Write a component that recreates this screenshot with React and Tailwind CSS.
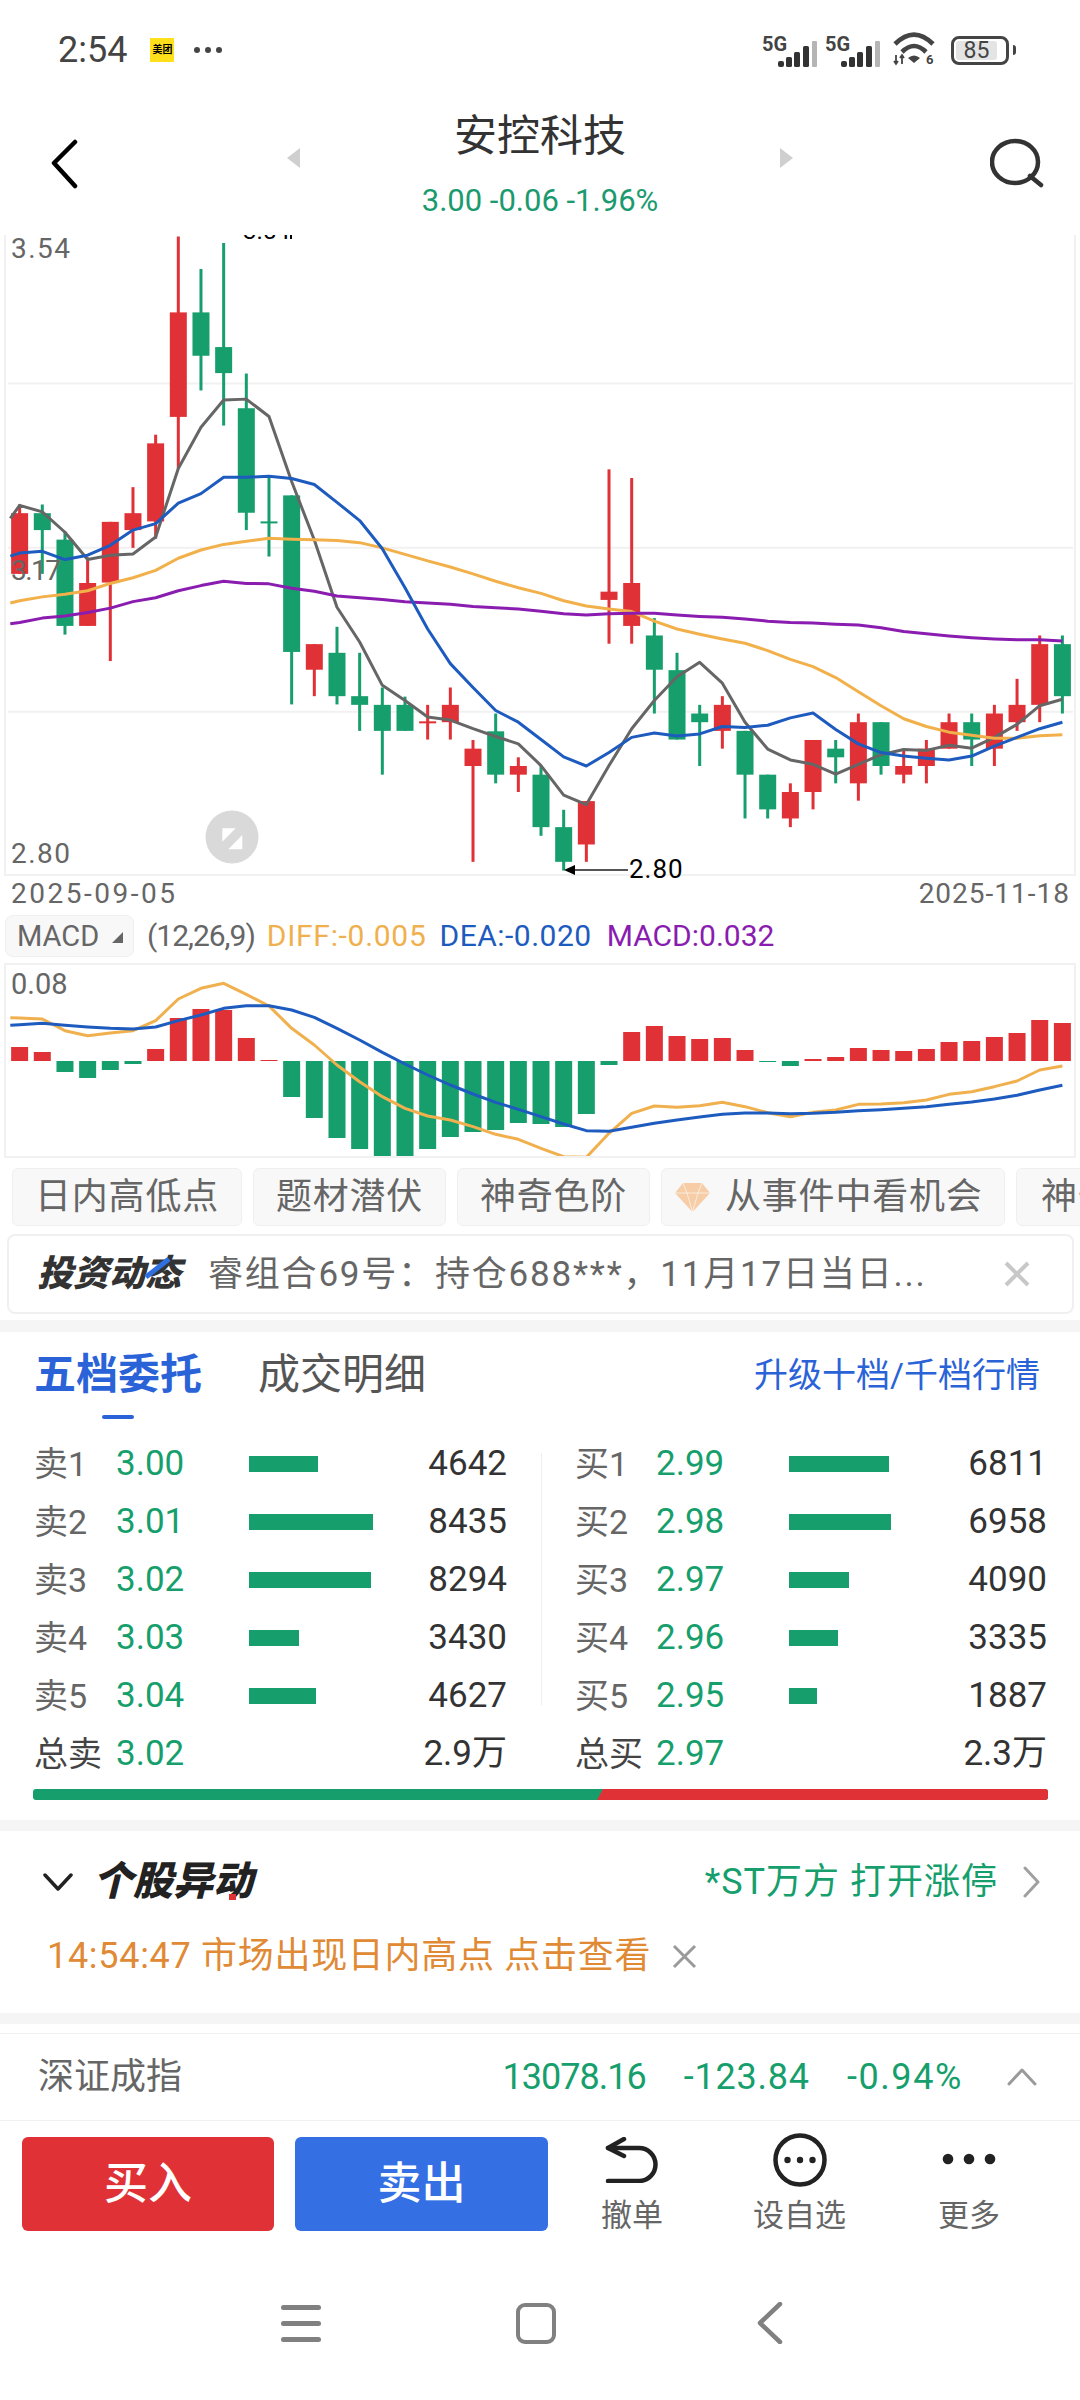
import React from "react";

const GREEN = "#169f6c";
const RED = "#e03136";

// [high, top, bottom, low, isRed] read off the chart
const candles = [
  [633, 653, 793, 793, 1], [633, 653, 692, 793, 0], [695, 714, 913, 933, 0], [755, 814, 913, 913, 1],
  [673, 673, 813, 994, 1], [593, 653, 692, 733, 1], [472, 492, 672, 712, 1], [15, 190, 431, 551, 1],
  [90, 190, 290, 370, 0], [30, 270, 330, 451, 0], [331, 411, 652, 692, 0], [570, 672, 676, 753, 0],
  [612, 612, 973, 1094, 0], [955, 955, 1014, 1075, 1], [915, 975, 1075, 1094, 0], [975, 1075, 1095, 1155, 0],
  [1055, 1095, 1155, 1256, 0], [1076, 1095, 1155, 1155, 0], [1095, 1133, 1137, 1175, 1], [1055, 1095, 1135, 1175, 1],
  [1176, 1196, 1236, 1457, 1], [1115, 1156, 1256, 1276, 0], [1216, 1236, 1256, 1296, 1], [1236, 1256, 1377, 1397, 0],
  [1337, 1377, 1457, 1477, 0], [1317, 1317, 1417, 1457, 1], [552, 834, 853, 954, 1], [572, 814, 913, 954, 1],
  [895, 935, 1014, 1115, 0], [975, 1015, 1175, 1175, 0], [1095, 1115, 1135, 1236, 0], [1075, 1095, 1155, 1196, 1],
  [1155, 1155, 1256, 1357, 0], [1256, 1256, 1336, 1357, 0], [1276, 1296, 1357, 1377, 1], [1176, 1176, 1296, 1336, 1],
  [1176, 1196, 1216, 1276, 0], [1115, 1135, 1276, 1316, 1], [1135, 1135, 1236, 1256, 0], [1196, 1236, 1256, 1276, 1],
  [1176, 1196, 1236, 1276, 1], [1115, 1135, 1196, 1196, 1], [1115, 1135, 1175, 1236, 0], [1095, 1115, 1196, 1236, 1],
  [1035, 1095, 1135, 1155, 1], [935, 955, 1095, 1135, 1], [935, 955, 1075, 1115, 0],
];

const ma5 = [665, 635, 650, 697, 760, 750, 747, 708, 550, 455, 392, 390, 430, 580, 715, 870, 950, 1050, 1085, 1123, 1130, 1150, 1168, 1185, 1235, 1303, 1325, 1235, 1150, 1085, 1030, 997, 1045, 1135, 1197, 1222, 1232, 1255, 1232, 1210, 1198, 1200, 1188, 1195, 1170, 1140, 1097, 1082];
const ma10 = [752, 745, 741, 760, 750, 727, 692, 677, 630, 608, 570, 570, 568, 573, 587, 628, 670, 735, 825, 920, 1000, 1055, 1108, 1135, 1175, 1215, 1236, 1205, 1170, 1160, 1167, 1162, 1145, 1147, 1142, 1125, 1114, 1152, 1185, 1205, 1213, 1218, 1222, 1213, 1190, 1170, 1150, 1135];
const ma20 = [860, 855, 846, 840, 832, 815, 802, 785, 757, 738, 725, 718, 711, 713, 714, 716, 721, 733, 748, 763, 777, 793, 810, 825, 838, 855, 867, 874, 880, 902, 920, 932, 943, 953, 970, 990, 1007, 1032, 1065, 1097, 1127, 1145, 1158, 1165, 1172, 1172, 1166, 1164];
const ma60 = [908, 905, 895, 890, 882, 872, 857, 848, 832, 820, 810, 815, 816, 826, 833, 844, 848, 852, 857, 860, 863, 868, 871, 874, 879, 885, 888, 885, 884, 884, 888, 891, 893, 897, 902, 905, 906, 909, 911, 917, 926, 931, 936, 940, 943, 945, 945, 948];

const macdBars = [441, 456, 516, 534, 510, 492, 447, 354, 327, 330, 414, 480, 591, 654, 714, 747, 768, 768, 747, 711, 696, 690, 669, 672, 681, 642, 495, 396, 378, 408, 417, 414, 450, 486, 498, 477, 471, 444, 450, 453, 447, 426, 423, 411, 399, 360, 369];
const diffLine = [353, 354, 357, 392, 407, 399, 392, 362, 297, 265, 250, 283, 318, 385, 435, 495, 545, 590, 625, 648, 660, 680, 703, 718, 745, 770, 772, 700, 640, 618, 622, 617, 607, 620, 638, 650, 637, 630, 613, 612, 608, 600, 583, 575, 560, 543, 510, 498];
const deaLine = [376, 374, 370, 376, 381, 385, 387, 381, 362, 345, 325, 317, 317, 330, 352, 385, 420, 457, 492, 525, 555, 582, 607, 628, 650, 672, 692, 694, 682, 670, 660, 651, 643, 639, 639, 641, 640, 637, 632, 629, 625, 620, 613, 606, 597, 586, 570, 556];

const cx = (i) => (57 + i * 65.83) / 2.904;
const priceY = (z) => z / 2.306 + 230;
const macdY = (z) => z / 3 + 900;

const toPoints = (list, mapY) =>
  list.map((v, i) => `${i === 0 ? 10.3 : cx(i - 1)},${mapY(v)}`).join(" ");

const sells = [
  ["卖1", "3.00", 69, "4642"],
  ["卖2", "3.01", 124, "8435"],
  ["卖3", "3.02", 122, "8294"],
  ["卖4", "3.03", 50, "3430"],
  ["卖5", "3.04", 67, "4627"],
];
const buys = [
  ["买1", "2.99", 100, "6811"],
  ["买2", "2.98", 102, "6958"],
  ["买3", "2.97", 60, "4090"],
  ["买4", "2.96", 49, "3335"],
  ["买5", "2.95", 28, "1887"],
];

const Signal = () => (
  <svg width="56" height="38" viewBox="0 -6 56 38" className="shrink-0">
    <text x="0" y="14" fontSize="20" fontWeight="700" fill="#444" fontFamily="Roboto, sans-serif">5G</text>
    <rect x="16" y="24" width="6" height="6" rx="2" fill="#333" />
    <rect x="24" y="20" width="6" height="10" rx="1.5" fill="#333" />
    <rect x="32" y="15" width="6" height="15" rx="1.5" fill="#333" />
    <rect x="41" y="9" width="6" height="21" rx="1.5" fill="#333" />
    <rect x="50" y="4" width="5" height="26" rx="1" fill="#b5b5b5" />
  </svg>
);

const StatusBar = () => (
  <div className="h-[100px] flex items-center pl-[58px] pr-[64px]">
    <span className="text-[36px] leading-none text-[#444]">2:54</span>
    <span className="ml-[23px] w-[24px] h-[24px] bg-[#ffe01b] flex items-center justify-center text-[10px] leading-none text-black font-bold">美团</span>
    <span className="ml-[20px] flex gap-[5px]">
      <i className="w-[6px] h-[6px] rounded-full bg-[#444]" />
      <i className="w-[6px] h-[6px] rounded-full bg-[#444]" />
      <i className="w-[6px] h-[6px] rounded-full bg-[#444]" />
    </span>
    <div className="ml-auto flex items-center">
      <Signal />
      <div className="ml-[7px]"><Signal /></div>
      <svg width="44" height="38" viewBox="0 0 44 38" className="ml-[12px]" fill="none" stroke="#444" strokeWidth="4.6">
        <path d="M2 13 Q21 -6 40 13" />
        <path d="M9 21 Q21 9 33 21" />
        <path d="M15 27 Q21 22 27 27 L21 32 Z" fill="#444" stroke="none" />
        <path d="M3 24 V33 M9 24 V33 M1 30 L3 33 L5 30 M7 27 L9 24 L11 27" strokeWidth="1.8" />
        <text x="33" y="33" fontSize="13" fontWeight="700" fill="#444" stroke="none" fontFamily="Roboto, sans-serif">6</text>
      </svg>
      <div className="ml-[14px] w-[58px] h-[29px] rounded-[8px] border-[3px] border-[#444] p-[2px]">
        <div className="w-[41px] h-full rounded-[3px] bg-[#e4e4e4] flex items-center justify-center text-[23px] leading-none text-[#444]">85</div>
      </div>
      <span className="ml-[4px] w-[3px] h-[10px] rounded-r bg-[#444]" />
    </div>
  </div>
);

const Header = () => (
  <div className="h-[135px] flex justify-between">
    <div className="w-[300px] pl-[50px] flex items-start justify-between">
      <svg width="28" height="50" viewBox="0 0 28 50" fill="none" stroke="#000" strokeWidth="4.5" strokeLinecap="round" strokeLinejoin="round" className="mt-[39px]">
        <path d="M25 3 L4 24 L25 47" />
      </svg>
      <svg width="13" height="20" viewBox="0 0 13 20" className="mt-[48px]"><path d="M13 0 V20 L0 10 Z" fill="#cfcfcf" /></svg>
    </div>
    <div className="flex flex-col items-center pt-[11px]">
      <span className="text-[43px] leading-[50px] text-[#333]">安控科技</span>
      <span className="mt-[22px] text-[31px] leading-[36px] text-[#1a9a6e] whitespace-nowrap">3.00 -0.06 -1.96%</span>
    </div>
    <div className="w-[300px] pr-[36px] flex items-start justify-between">
      <svg width="13" height="20" viewBox="0 0 13 20" className="mt-[48px]"><path d="M0 0 V20 L13 10 Z" fill="#cfcfcf" /></svg>
      <svg width="54" height="50" viewBox="0 0 54 50" fill="none" stroke="#333" strokeWidth="4.5" strokeLinecap="round" className="mt-[38px]">
        <ellipse cx="25" cy="24" rx="23" ry="21" />
        <path d="M40 38 L51 47" />
      </svg>
    </div>
  </div>
);

const PriceChart = () => (
  <div className="ml-[4px] w-[1072px] h-[641px] border-x-2 border-b-2 border-[#f1f1f1]">
    <svg width="1068" height="639" viewBox="6 235 1068 639" className="overflow-visible block" fontFamily="Roboto, sans-serif">
      <defs>
        <clipPath id="priceClip"><rect x="0" y="235" width="1080" height="660" /></clipPath>
      </defs>
      <g clipPath="url(#priceClip)">
        {[354, 733, 1111].map((z) => (
          <line key={z} x1="8" x2="1073" y1={priceY(z)} y2={priceY(z)} stroke="#f1f1f1" strokeWidth="2" />
        ))}
        {candles.map(([high, top, bottom, low, up], i) => (
          <g key={i} fill={up ? RED : GREEN}>
            <rect x={cx(i) - 1.5} y={priceY(high)} width="3" height={priceY(low) - priceY(high)} />
            <rect x={cx(i) - 8.5} y={priceY(top)} width="17" height={Math.max(priceY(bottom) - priceY(top), 2)} />
          </g>
        ))}
        <g fill="none" strokeWidth="3" strokeLinejoin="round">
          <polyline points={toPoints(ma5, priceY)} stroke="#666" />
          <polyline points={toPoints(ma20, priceY)} stroke="#f2b04a" />
          <polyline points={toPoints(ma60, priceY)} stroke="#8a1cb0" />
          <polyline points={toPoints(ma10, priceY)} stroke="#1d5bbf" />
        </g>
        <text x="243" y="239" fontSize="24" fill="#000">3.54</text>
        <line x1="291" x2="291" y1="235" y2="239" stroke="#000" strokeWidth="2" />
      </g>
      <g fontSize="28" fill="#666">
        <text x="11" y="258" letterSpacing="1.5">3.54</text>
        <text x="11" y="580" letterSpacing="-1.5">3.17</text>
        <text x="11" y="863" letterSpacing="1.5">2.80</text>
      </g>
      <path d="M564 870 L575 865 V875 Z" fill="#000" />
      <line x1="575" x2="628" y1="870" y2="870" stroke="#555" strokeWidth="2" />
      <text x="629" y="878" fontSize="26" fill="#000" letterSpacing="1">2.80</text>
      <circle cx="232" cy="837" r="26.5" fill="#d9d9d9" />
      <path d="M222.3 828.3 H235.7 L222.3 841.7 Z M242.3 835 V849.3 H228.3 Z" fill="#fff" />
    </svg>
  </div>
);

const MacdChart = () => (
  <div className="ml-[4px] w-[1072px] h-[195px] border-2 border-[#f1f1f1] overflow-hidden">
    <svg width="1068" height="191" viewBox="6 965 1068 191" className="block" fontFamily="Roboto, sans-serif">
      {macdBars.map((z, i) => {
        const up = z < 483;
        return (
          <rect
            key={i}
            x={cx(i) - 8.5}
            y={macdY(Math.min(z, 483))}
            width="17"
            height={Math.abs(macdY(z) - macdY(483))}
            fill={up ? RED : GREEN}
          />
        );
      })}
      <g fill="none" strokeWidth="3" strokeLinejoin="round">
        <polyline points={toPoints(diffLine, macdY)} stroke="#f0b04e" />
        <polyline points={toPoints(deaLine, macdY)} stroke="#1d5bbf" />
      </g>
      <text x="11" y="994" fontSize="29" fill="#666">0.08</text>
    </svg>
  </div>
);

const Chip = ({ className, children }) => (
  <div className={`shrink-0 h-[58px] rounded-[6px] border border-[#efefef] bg-[#f8f8f8] flex items-center justify-center text-[36px] tracking-[0.8px] text-[#666] leading-none ${className}`}>
    {children}
  </div>
);

const Side = ({ rows, width, labelW }) => (
  <div style={{ width }}>
    {rows.map(([label, price, bar, vol]) => (
      <div key={label} className="h-[58px] flex items-center text-[35px]">
        <span className="text-[#666] text-[34px]" style={{ width: labelW }}>{label}</span>
        <span className="w-[133px] text-[#169f6c]">{price}</span>
        <span className="h-[16px] bg-[#169f6c]" style={{ width: bar }} />
        <span className="ml-auto text-[#333]">{vol}</span>
      </div>
    ))}
  </div>
);

const Total = ({ label, price, vol, width, labelW }) => (
  <div className="h-[58px] flex items-center text-[35px]" style={{ width }}>
    <span className="text-[#444] text-[34px]" style={{ width: labelW }}>{label}</span>
    <span className="text-[#169f6c]">{price}</span>
    <span className="ml-auto text-[#333]">{vol}</span>
  </div>
);

const Band = ({ className = "h-[12px]" }) => <div className={`bg-[#f5f5f5] ${className}`} />;

const App = () => {
  return (
    <div className="w-[1080px] h-[2400px] bg-white overflow-hidden flex flex-col font-['Roboto','Noto_Sans_CJK_SC',sans-serif]">
      <StatusBar />
      <Header />
      <PriceChart />

      {/* Date axis */}
      <div className="h-[39px] pb-[4px] pl-[11px] pr-[10px] flex items-center justify-between text-[28px] text-[#666]">
        <span className="tracking-[2.5px]">2025-09-05</span>
        <span className="tracking-[1px]">2025-11-18</span>
      </div>

      {/* MACD legend */}
      <div className="h-[42px] pl-[5px] flex items-center text-[30px] leading-none whitespace-nowrap">
        <div className="w-[129px] h-[42px] rounded-[8px] border border-[#efefef] bg-[#f8f8f8] pl-[11px] flex items-center text-[#666] text-[29px]">
          MACD
          <svg width="11" height="11" viewBox="0 0 11 11" className="ml-[13px] mt-[3px]"><path d="M11 0 V11 H0 Z" fill="#666" /></svg>
        </div>
        <span className="ml-[13px] tracking-[-1px] text-[#666]">(12,26,9)</span>
        <span className="ml-[12px] tracking-[0.7px] text-[#f0b04e]">DIFF:-0.005</span>
        <span className="ml-[13px] tracking-[0.5px] text-[#1d5bbf]">DEA:-0.020</span>
        <span className="ml-[15px] text-[#8a1cb0]">MACD:0.032</span>
      </div>
      <div className="h-[6px]" />
      <MacdChart />

      {/* Topic chips */}
      <div className="mt-[10px] pl-[12px] flex gap-[11px] overflow-hidden">
        <Chip className="w-[230px]">日内高低点</Chip>
        <Chip className="w-[193px]">题材潜伏</Chip>
        <Chip className="w-[193px]">神奇色阶</Chip>
        <Chip className="w-[344px] gap-[15px] justify-start pl-[13px]">
          <svg width="35" height="30" viewBox="0 0 35 30">
            <path d="M8 1 H27 L35 11 L17.5 30 L0 11 Z" fill="#f6cda6" />
            <path d="M0 11 H35 M8 1 L12 11 L17.5 30 L23 11 L27 1" stroke="#fff" strokeWidth="1" fill="none" opacity="0.6" />
          </svg>
          从事件中看机会
        </Chip>
        <Chip className="w-[200px] justify-start pl-[24px]">神奇九转</Chip>
      </div>

      {/* News card */}
      <div className="mt-[8px] ml-[7px] w-[1067px] h-[80px] rounded-[8px] border-2 border-[#f0f0f0] pl-[28px] flex items-center whitespace-nowrap">
        <span className="relative w-[145px] text-[36px] leading-none font-black italic text-[#333]">
          投资动态
          <svg width="27" height="22" viewBox="0 0 27 22" className="absolute left-[107px] top-[1px]">
            <path d="M2 20 L25 2" stroke="#2f6fe0" strokeWidth="5" />
          </svg>
        </span>
        <span className="ml-[26px] text-[35px] tracking-[1.8px] leading-none text-[#666]">睿组合69号：持仓688***，11月17日当日...</span>
        <svg width="26" height="26" viewBox="0 0 26 26" className="ml-auto mr-[42px]" stroke="#c8c8c8" strokeWidth="4">
          <path d="M2 2 L24 24 M24 2 L2 24" />
        </svg>
      </div>

      <div className="h-[6px]" />
      <Band />

      {/* Order book tabs */}
      <div className="h-[103px] pl-[34px] pr-[40px] pt-[18px] flex items-start">
        <div className="flex flex-col items-center">
          <span className="text-[42px] leading-[50px] font-bold text-[#2a63d8]">五档委托</span>
          <span className="mt-[15px] w-[32px] h-[4px] rounded bg-[#2a63d8]" />
        </div>
        <span className="ml-[56px] text-[42px] leading-[50px] text-[#555]">成交明细</span>
        <span className="ml-auto text-[34px] leading-[50px] text-[#2a63d8]">升级十档/千档行情</span>
      </div>

      {/* Order book */}
      <div className="pl-[34px] flex">
        <Side rows={sells} width={473} labelW={82} />
        <div className="ml-[34px] mt-[18px] w-[1px] h-[252px] bg-[#eeeeee]" />
        <div className="ml-[33px]"><Side rows={buys} width={472} labelW={81} /></div>
      </div>
      <div className="pl-[34px] flex">
        <Total label="总卖" price="3.02" vol="2.9万" width={473} labelW={82} />
        <div className="ml-[68px]"><Total label="总买" price="2.97" vol="2.3万" width={472} labelW={81} /></div>
      </div>
      <div className="mt-[6px] ml-[33px] w-[1015px] h-[11px] rounded-[3px] bg-[#169f6c] overflow-hidden flex justify-end">
        <div className="w-[451px] h-full bg-[#e03136] [clip-path:polygon(6px_0,100%_0,100%_100%,0_100%)]" />
      </div>

      <div className="h-[20px]" />
      <Band className="h-[11px]" />

      {/* Stock alerts */}
      <div className="h-[182px] flex flex-col">
        <div className="mt-[31px] h-[40px] pl-[43px] pr-[40px] flex items-center">
          <svg width="30" height="18" viewBox="0 0 30 18" fill="none" stroke="#222" strokeWidth="3.5" strokeLinecap="round" strokeLinejoin="round">
            <path d="M2 2 L15 16 L28 2" />
          </svg>
          <span className="relative ml-[20px] text-[40px] leading-none font-black italic text-[#222]">
            个股异动
            <i className="absolute left-[136px] top-[32px] w-[7px] h-[6px] bg-[#e03136]" />
          </span>
          <span className="ml-auto text-[36px] tracking-[1px] leading-none text-[#169f6c]">*ST万方 打开涨停</span>
          <svg width="17" height="32" viewBox="0 0 17 32" fill="none" stroke="#a0a0a0" strokeWidth="3" strokeLinecap="round" strokeLinejoin="round" className="ml-[25px]">
            <path d="M2 2 L15 16 L2 30" />
          </svg>
        </div>
        <div className="mt-[37px] h-[34px] pl-[47px] flex items-center">
          <span className="text-[36px] tracking-[0.7px] leading-none text-[#e08a36] whitespace-nowrap">14:54:47 市场出现日内高点 点击查看</span>
          <svg width="25" height="25" viewBox="0 0 25 25" stroke="#9a9a9a" strokeWidth="3" className="ml-[21px]">
            <path d="M2 2 L23 23 M23 2 L2 23" />
          </svg>
        </div>
      </div>

      <Band className="h-[11px]" />
      <div className="h-[9px]" />

      {/* Index ticker */}
      <div className="h-[88px] border-y border-[#f0f0f0] pl-[38px] pr-[43px] flex items-center text-[36px] leading-none">
        <span className="text-[#666]">深证成指</span>
        <span className="ml-auto tracking-[-1px] text-[#169f6c]">13078.16</span>
        <span className="ml-[38px] tracking-[0.8px] text-[#169f6c]">-123.84</span>
        <span className="ml-[37px] tracking-[1.6px] text-[#169f6c]">-0.94%</span>
        <svg width="30" height="18" viewBox="0 0 30 18" fill="none" stroke="#9a9a9a" strokeWidth="3" strokeLinecap="round" strokeLinejoin="round" className="ml-[44px]">
          <path d="M2 16 L15 2 L28 16" />
        </svg>
      </div>

      {/* Trade buttons */}
      <div className="mt-[16px] pl-[22px] flex items-start">
        <button className="w-[252px] h-[94px] rounded-[6px] bg-[#e03136] text-white text-[44px] font-medium">买入</button>
        <button className="ml-[21px] w-[253px] h-[94px] rounded-[6px] bg-[#346fe3] text-white text-[44px] font-medium">卖出</button>
        <div className="ml-[52px] w-[64px] flex flex-col items-center">
          <svg width="54" height="46" viewBox="0 0 54 46" fill="none" stroke="#222" strokeWidth="4.5" strokeLinecap="round" strokeLinejoin="round">
            <path d="M19 2 L3 11 L19 19" />
            <path d="M3 11 H34 A16.5 16.5 0 0 1 34 44 H3" />
          </svg>
          <span className="mt-[16px] text-[31px] leading-[34px] text-[#666] whitespace-nowrap">撤单</span>
        </div>
        <div className="ml-[89px] w-[93px] flex flex-col items-center -mt-[4px]">
          <svg width="54" height="54" viewBox="0 0 54 54" fill="none">
            <circle cx="27" cy="27" r="24.5" stroke="#222" strokeWidth="4.5" />
            <circle cx="14.5" cy="27" r="3.2" fill="#222" />
            <circle cx="27" cy="27" r="3.2" fill="#222" />
            <circle cx="39.5" cy="27" r="3.2" fill="#222" />
          </svg>
          <span className="mt-[12px] text-[31px] leading-[34px] text-[#666] whitespace-nowrap">设自选</span>
        </div>
        <div className="ml-[92px] w-[62px] flex flex-col items-center">
          <svg width="54" height="46" viewBox="0 0 54 46">
            <circle cx="6" cy="22" r="5.3" fill="#222" />
            <circle cx="27" cy="22" r="5.3" fill="#222" />
            <circle cx="48" cy="22" r="5.3" fill="#222" />
          </svg>
          <span className="mt-[16px] text-[31px] leading-[34px] text-[#666] whitespace-nowrap">更多</span>
        </div>
      </div>

      {/* System nav */}
      <div className="mt-[69px] pl-[281px] flex items-center">
        <div className="w-[40px] flex flex-col gap-[11px]">
          <i className="h-[5px] rounded-full bg-[#808080]" />
          <i className="h-[5px] rounded-full bg-[#808080]" />
          <i className="h-[5px] rounded-full bg-[#808080]" />
        </div>
        <div className="ml-[195px] w-[40px] h-[41px] rounded-[9px] border-[4px] border-[#808080]" />
        <svg width="26" height="42" viewBox="0 0 26 42" fill="none" stroke="#808080" strokeWidth="4.5" strokeLinecap="round" strokeLinejoin="round" className="ml-[201px]">
          <path d="M23 2 L3 21 L23 40" />
        </svg>
      </div>
    </div>
  );
};

export default App;
